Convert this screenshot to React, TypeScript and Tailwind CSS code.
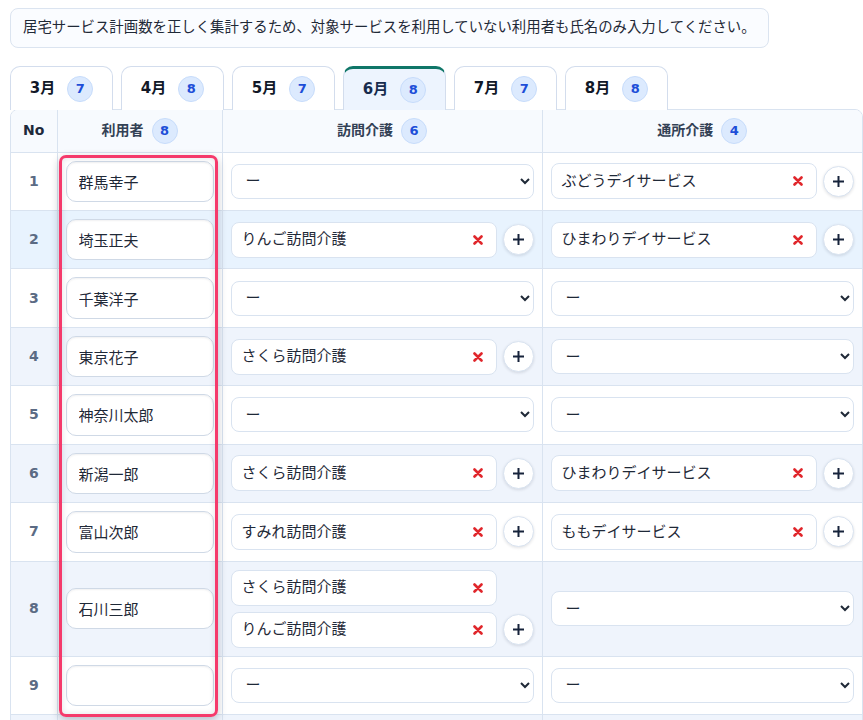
import React from "react";

type Row = { no: number; name: string; home: string[]; day: string[] };

const rows: Row[] = [
  { no: 1, name: "群馬幸子", home: [], day: ["ぶどうデイサービス"] },
  { no: 2, name: "埼玉正夫", home: ["りんご訪問介護"], day: ["ひまわりデイサービス"] },
  { no: 3, name: "千葉洋子", home: [], day: [] },
  { no: 4, name: "東京花子", home: ["さくら訪問介護"], day: [] },
  { no: 5, name: "神奈川太郎", home: [], day: [] },
  { no: 6, name: "新潟一郎", home: ["さくら訪問介護"], day: ["ひまわりデイサービス"] },
  { no: 7, name: "富山次郎", home: ["すみれ訪問介護"], day: ["ももデイサービス"] },
  { no: 8, name: "石川三郎", home: ["さくら訪問介護", "りんご訪問介護"], day: [] },
  { no: 9, name: "", home: [], day: [] },
  { no: 10, name: "", home: [], day: [] },
];

const tabs = [
  { label: "3月", count: 7 },
  { label: "4月", count: 8 },
  { label: "5月", count: 7 },
  { label: "6月", count: 8, active: true },
  { label: "7月", count: 7 },
  { label: "8月", count: 8 },
];

function Badge({ n }: { n: number }) {
  return (
    <span className="inline-flex h-[26px] w-[26px] items-center justify-center rounded-full border border-[#c7dcfb] bg-[#dceafe] text-[13px] font-bold text-[#1d4ed8]">
      {n}
    </span>
  );
}

function RemoveIcon() {
  return (
    <svg width="10" height="10" viewBox="0 0 10 10" className="shrink-0">
      <path d="M1.5 1.5 L8.5 8.5 M8.5 1.5 L1.5 8.5" stroke="#e0262b" strokeWidth="2.6" strokeLinecap="round" />
    </svg>
  );
}

function PlusButton({ hidden }: { hidden?: boolean }) {
  return (
    <button
      type="button"
      className={
        "flex h-[31px] w-[31px] shrink-0 items-center justify-center rounded-full border border-[#d9e3f0] bg-white shadow-[0_1px_3px_rgba(15,23,42,0.12)] " +
        (hidden ? "invisible" : "")
      }
    >
      <svg width="13" height="13" viewBox="0 0 13 13">
        <path d="M6.5 1 V12 M1 6.5 H12" stroke="#16233b" strokeWidth="2" />
      </svg>
    </button>
  );
}

function EmptySelect() {
  return (
    <select className="h-[35px] w-full rounded-lg border border-[#d9e3f0] bg-white pl-[10px] pr-2 text-[15px] text-[#1f2937] outline-none">
      <option>ー</option>
    </select>
  );
}

function ServiceCell({ items }: { items: string[] }) {
  if (items.length === 0) return <EmptySelect />;
  return (
    <div className="flex flex-col gap-[6px]">
      {items.map((s, i) => (
        <div key={i} className="flex items-center gap-[6px]">
          <div className="flex h-9 flex-1 items-center justify-between rounded-lg border border-[#d9e3f0] bg-white pl-[10px] pr-[13px] text-[15px] text-[#1f2937]">
            <span>{s}</span>
            <RemoveIcon />
          </div>
          <PlusButton hidden={i !== items.length - 1} />
        </div>
      ))}
    </div>
  );
}

function rowBg(no: number) {
  if (no === 2) return "bg-[#e8f3fe]";
  if (no % 2 === 0) return "bg-[#eff4fc]";
  return "bg-white";
}

export default function App() {
  return (
    <div
      className="min-h-screen bg-white pl-[10px] pt-2 text-[#1f2937]"
      style={{ fontFamily: '"DejaVu Sans", "Noto Sans CJK JP", sans-serif' }}
    >
      <div className="flex h-10 w-fit items-center rounded-lg border border-[#dbe4f0] bg-[#fafcff] px-3 text-[14.4px] text-[#1f2937]">
        居宅サービス計画数を正しく集計するため、対象サービスを利用していない利用者も氏名のみ入力してください。
      </div>

      <div className="mt-[18px] flex gap-2">
        {tabs.map((t) => (
          <div
            key={t.label}
            className={
              "relative z-10 -mb-px flex h-[44px] w-[103px] items-center justify-center gap-3 rounded-t-[10px] border border-b-0 " +
              (t.active
                ? "border-[#d3dded] border-t-[3px] border-t-[#0f7668] bg-[#edf4fe] text-[#172b4d]"
                : "border-[#d3dded] bg-white text-[#111827]")
            }
          >
            <span className="text-[15px] font-bold">{t.label}</span>
            <Badge n={t.count} />
          </div>
        ))}
      </div>

      <div className="relative w-[853px]">
        <div className="overflow-hidden rounded-tl-lg rounded-tr-lg border border-[#d9e3f0]">
          <table className="w-full table-fixed border-collapse">
            <colgroup>
              <col className="w-[46px]" />
              <col className="w-[165px]" />
              <col className="w-[320px]" />
              <col />
            </colgroup>
            <thead>
              <tr className="h-[42px] bg-[#f7fafe]">
                <th className="border-r border-[#d9e3f0] text-[14px] font-bold text-[#1e293b]">No</th>
                <th className="border-r border-[#d9e3f0]">
                  <div className="flex items-center justify-center gap-2 text-[14px] font-bold text-[#334155]">
                    利用者 <Badge n={8} />
                  </div>
                </th>
                <th className="border-r border-[#d9e3f0]">
                  <div className="flex items-center justify-center gap-2 text-[14px] font-bold text-[#334155]">
                    訪問介護 <Badge n={6} />
                  </div>
                </th>
                <th>
                  <div className="flex items-center justify-center gap-2 text-[14px] font-bold text-[#334155]">
                    通所介護 <Badge n={4} />
                  </div>
                </th>
              </tr>
            </thead>
            <tbody>
              {rows.map((r) => (
                <tr key={r.no} className={rowBg(r.no) + " border-t border-[#d9e3f0]"}>
                  <td className="border-r border-[#d9e3f0] text-center text-[14px] font-bold text-[#5b6b84]">
                    {r.no}
                  </td>
                  <td className="border-r border-[#d9e3f0] px-2 py-2">
                    <input
                      readOnly
                      value={r.name}
                      className="block h-[41.45px] w-full rounded-[10px] border border-[#cfd9e6] bg-white px-3 text-[15px] text-[#1f2937] shadow-[inset_0_1px_2px_rgba(15,23,42,0.06)] outline-none"
                    />
                  </td>
                  <td className="border-r border-[#d9e3f0] px-2 py-2 align-middle">
                    <ServiceCell items={r.home} />
                  </td>
                  <td className="px-2 py-2 align-middle">
                    <ServiceCell items={r.day} />
                  </td>
                </tr>
              ))}
            </tbody>
          </table>
        </div>

        {/* highlight frame around the user-name column */}
        <div className="pointer-events-none absolute left-[49px] top-[46px] h-[562px] w-[159px] rounded-[7px] border-[3px] border-[#f53a6b] shadow-[0_3px_8px_rgba(15,23,42,0.25),inset_0_0_6px_rgba(15,23,42,0.12)]" />
      </div>
    </div>
  );
}
